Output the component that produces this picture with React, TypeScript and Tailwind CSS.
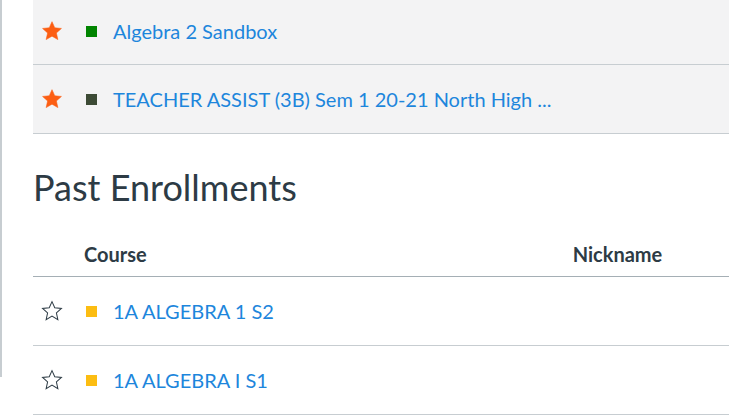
import { ReactNode } from "react";

const LINK = "text-[#1d86dc]";

function Star({ filled }: { filled: boolean }) {
  return (
    <svg width="22" height="22" viewBox="0 0 24 24" className="shrink-0">
      <path
        d="M12 1.8l3 6.7 7.3.7-5.5 4.9 1.6 7.3L12 17.6l-6.4 3.8 1.6-7.3L1.7 9.2 9 8.5z"
        fill={filled ? "#fc5e13" : "none"}
        stroke={filled ? "#fc5e13" : "#2d3b45"}
        strokeWidth={filled ? 0.6 : 1.1}
        strokeLinejoin="miter"
      />
    </svg>
  );
}

function CourseRow({
  filled,
  color,
  name,
  shaded,
  height,
}: {
  filled: boolean;
  color: string;
  name: ReactNode;
  shaded?: boolean;
  height: string;
}) {
  return (
    <div
      className={`flex items-center border-b border-[#c7cdd1] ${height} ${
        shaded ? "bg-[#f3f3f4]" : "bg-white"
      }`}
    >
      <div className="pl-[8px]">
        <Star filled={filled} />
      </div>
      <span className="ml-[23px] w-[11px] h-[11px] shrink-0" style={{ backgroundColor: color }} />
      <a className={`ml-[16px] text-[20px] leading-none whitespace-nowrap ${LINK}`}>{name}</a>
    </div>
  );
}

export default function App() {
  return (
    <div
      className="w-[729px] h-[418px] overflow-hidden bg-white flex text-[#2d3b45]"
      style={{ fontFamily: "Lato, 'Helvetica Neue', Arial, sans-serif" }}
    >
      {/* sidebar edge */}
      <div className="w-[2px] h-[377px] bg-[#c7cdd1] shrink-0" />

      <div className="ml-[31px] w-[720px] shrink-0">
        {/* Favorited courses */}
        <CourseRow
          shaded
          filled
          color="#008400"
          name="Algebra 2 Sandbox"
          height="h-[65px] pb-[2px]"
        />
        <CourseRow
          shaded
          filled
          color="#3c4a35"
          name="TEACHER ASSIST (3B) Sem 1 20-21 North High ..."
          height="h-[69px]"
        />

        {/* Past enrollments */}
        <h2 className="text-[36px] leading-none font-normal mt-[35px] mb-0">Past Enrollments</h2>

        <div className="flex items-end h-[72px] pb-[12px] border-b border-[#a5afb5] text-[20px] font-bold leading-none">
          <span className="ml-[51px]">Course</span>
          <span className="ml-[426px]">Nickname</span>
        </div>

        <CourseRow filled={false} color="#fcbd12" name="1A ALGEBRA 1 S2" height="h-[69px]" />
        <CourseRow filled={false} color="#fcbd12" name="1A ALGEBRA I S1" height="h-[69px]" />
      </div>
    </div>
  );
}
